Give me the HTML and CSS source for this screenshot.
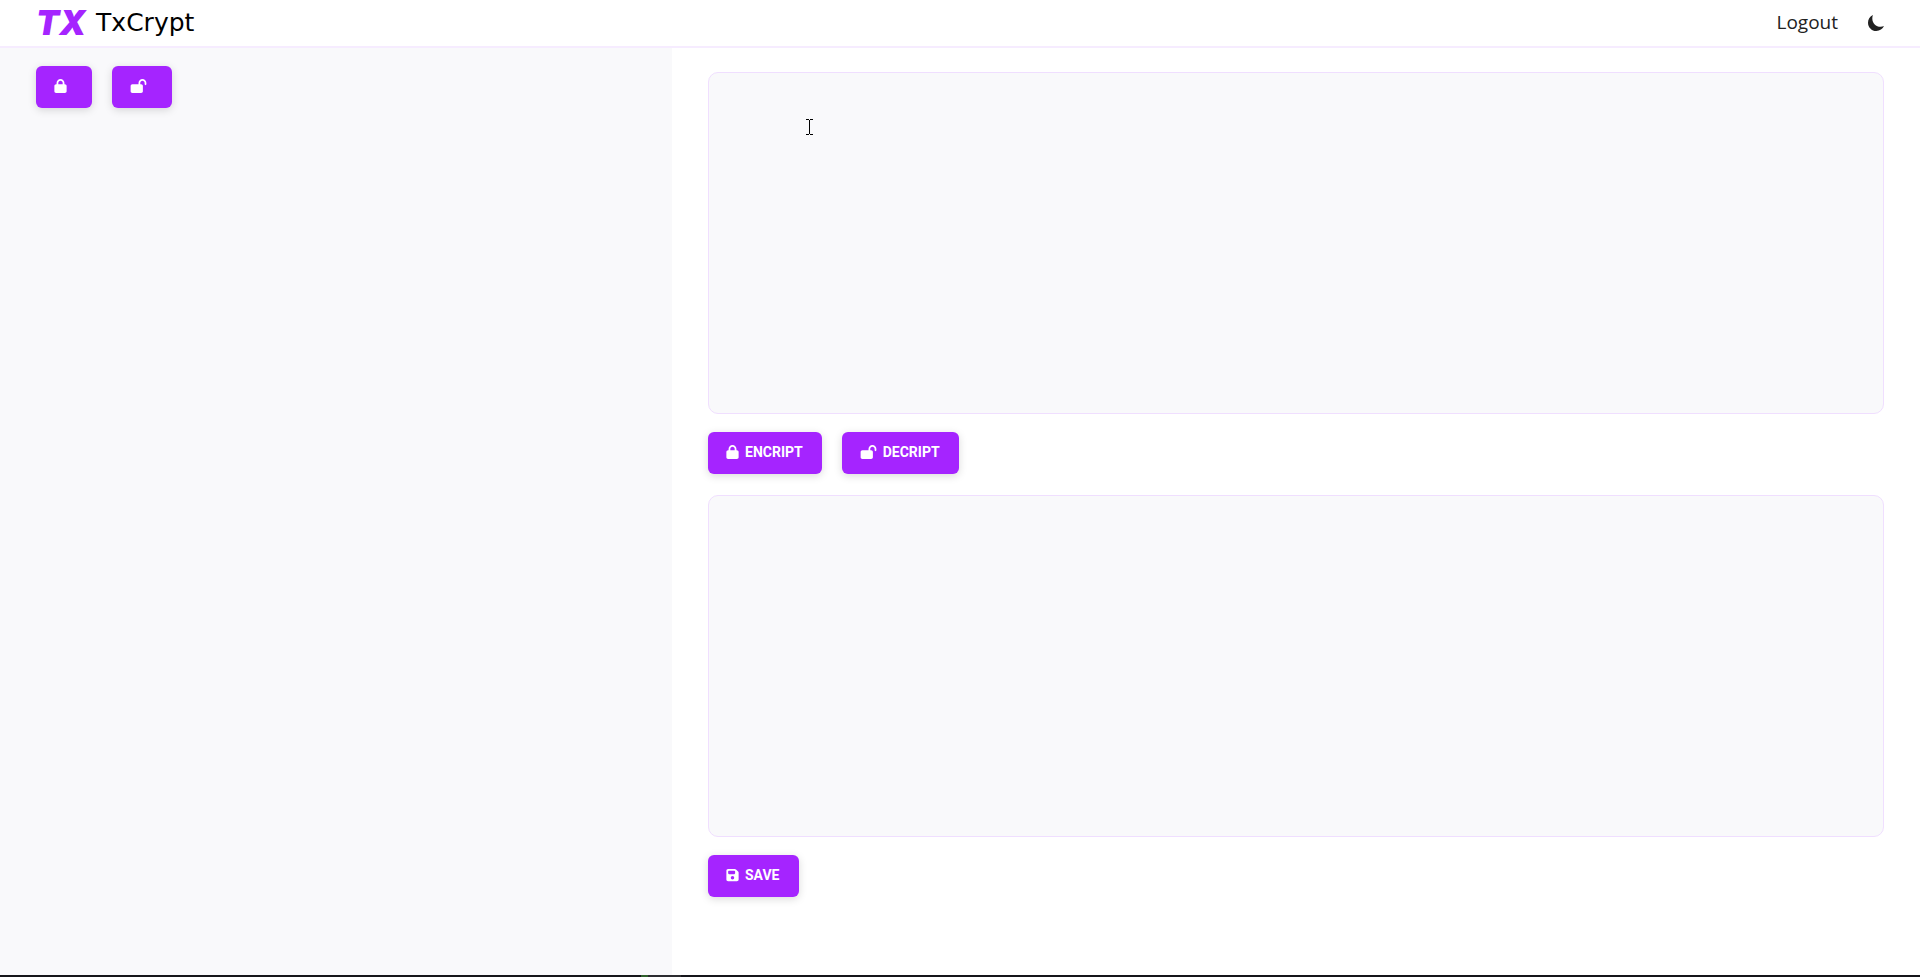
FILE: index.html
```html
<!DOCTYPE html>
<html lang="en">
<head>
<meta charset="utf-8">
<meta name="viewport" content="width=device-width, initial-scale=1">
<title>TxCrypt</title>
<link rel="stylesheet" href="styles.css">
</head>
<body>
<svg class="sprite" aria-hidden="true">
  <symbol id="lock" viewBox="0 0 448 512"><path d="M144 144v48H304V144c0-44.200-35.800-80-80-80s-80 35.800-80 80zM80 192V144C80 64.500 144.500 0 224 0s144 64.500 144 144v48h16c35.300 0 64 28.700 64 64V448c0 35.300-28.700 64-64 64H64c-35.300 0-64-28.700-64-64V256c0-35.300 28.700-64 64-64H80z"/></symbol>
  <symbol id="unlock" viewBox="0 0 576 512"><path d="M352 144c0-44.200 35.800-80 80-80s80 35.800 80 80v48c0 17.700 14.300 32 32 32s32-14.300 32-32V144C576 64.500 511.500 0 432 0S288 64.500 288 144v48H64c-35.300 0-64 28.700-64 64V448c0 35.300 28.700 64 64 64H384c35.300 0 64-28.700 64-64V256c0-35.300-28.700-64-64-64H352V144z"/></symbol>
  <symbol id="save" viewBox="0 0 448 512"><path d="M64 32C28.700 32 0 60.700 0 96V416c0 35.300 28.700 64 64 64H384c35.300 0 64-28.700 64-64V173.300c0-17-6.700-33.300-18.700-45.300L352 50.700C340 38.700 323.700 32 306.700 32H64zm0 96c0-17.700 14.300-32 32-32H288c17.700 0 32 14.300 32 32v64c0 17.700-14.300 32-32 32H96c-17.700 0-32-14.300-32-32V128zM224 288a64 64 0 1 1 0 128 64 64 0 1 1 0-128z"/></symbol>
</svg>
<div class="page">
  <header class="topbar">
    <a class="brand" href="#"><span class="brand-mark">TX</span><span class="brand-name">TxCrypt</span></a>
    <nav class="nav">
      <a class="nav-link" href="#">Logout</a>
      <button class="theme-toggle" type="button" aria-label="Dark mode">
        <svg viewBox="32 32 448 448" aria-hidden="true"><path d="M152.620 126.770c0-33 4.850-66.350 17.230-94.770C87.540 67.830 32 151.890 32 247.380 32 375.850 136.150 480 264.620 480c95.490 0 179.550-55.540 215.380-137.850-28.420 12.380-61.800 17.230-94.770 17.230-128.470 0-232.610-104.140-232.610-232.610z"/></svg>
      </button>
    </nav>
  </header>
  <div class="content">
    <aside class="sidebar">
      <div class="actions">
        <button class="btn" type="button" aria-label="Encrypt files"><svg class="icon" aria-hidden="true"><use href="#lock"/></svg><span></span></button>
        <button class="btn" type="button" aria-label="Decrypt files"><svg class="icon icon-wide" aria-hidden="true"><use href="#unlock"/></svg><span></span></button>
      </div>
    </aside>
    <main class="editor">
      <div class="field">
        <textarea class="text" aria-label="Input text"></textarea>
        <svg class="caret" viewBox="0 0 7 16" aria-hidden="true"><path d="M0 0h3v1h1V0h3v1H4v14h3v1H4v-1H3v1H0v-1h3V1H0z"/></svg>
      </div>
      <div class="actions">
        <button class="btn" type="button"><svg class="icon" aria-hidden="true"><use href="#lock"/></svg><span>ENCRIPT</span></button>
        <button class="btn" type="button"><svg class="icon icon-wide" aria-hidden="true"><use href="#unlock"/></svg><span>DECRIPT</span></button>
      </div>
      <textarea class="text result" aria-label="Result text"></textarea>
      <div class="actions">
        <button class="btn" type="button"><svg class="icon" aria-hidden="true"><use href="#save"/></svg><span>SAVE</span></button>
      </div>
    </main>
  </div>
  <div class="edge"><span class="edge-green"></span><span class="edge-grey"></span></div>
</div>
</body>
</html>
```
FILE: styles.css
```css
* { box-sizing: border-box; }

body {
  margin: 0;
  background: #fff;
  color: #222;
  font-family: Roboto, "Liberation Sans", Arial, sans-serif;
}

.sprite { display: none; }

.page {
  display: flex;
  flex-direction: column;
  min-height: 100vh;
}

.topbar {
  display: flex;
  align-items: center;
  justify-content: space-between;
  height: 48px;
  padding: 0 36px;
  border-bottom: 2px solid #f6ecff;
}

.brand {
  display: flex;
  align-items: center;
  gap: 10px;
  color: #000;
  text-decoration: none;
}

.brand-mark {
  color: #a524ff;
  font: italic 900 34px/46px Inter, sans-serif;
}

.brand-name { font: 25px/46px "DejaVu Sans", sans-serif; }

.nav {
  display: flex;
  align-items: center;
  gap: 30px;
}

.nav-link {
  padding-bottom: 2px;
  color: #222;
  font: 19px/44px "Open Sans", sans-serif;
  text-decoration: none;
}

.theme-toggle {
  display: flex;
  padding: 0;
  border: 0;
  background: none;
  cursor: pointer;
}

.theme-toggle svg {
  width: 16px;
  height: 16px;
  fill: #222;
}

.content {
  display: flex;
  flex: 1;
}

.sidebar {
  width: 35%;
  padding: 18px 36px;
  background: #f9f9fb;
}

.editor {
  flex: 1;
  padding: 24px 36px;
}

.field { position: relative; }

.text {
  display: block;
  width: 100%;
  height: 35vh;
  margin-bottom: 18px;
  padding: 18px;
  border: 1px solid #f0dfff;
  border-radius: 10px;
  outline: 0;
  background: #f9f9fb;
  resize: none;
}

.result { margin-top: 21px; }

/* text pointer floating over the input field */
.caret {
  position: absolute;
  top: 47px;
  left: 98px;
  width: 7px;
  height: 16px;
  fill: #000;
  pointer-events: none;
}

.actions {
  display: flex;
  gap: 20px;
}

.btn {
  display: flex;
  align-items: center;
  gap: 6px;
  height: 42px;
  padding: 0 19px 2px 18px;
  border: 0;
  border-radius: 6px;
  background: #a524ff;
  box-shadow: 0 2px 8px rgba(0, 0, 0, 0.15);
  color: #fff;
  font-family: inherit;
  font-size: 14px;
  font-weight: 700;
  cursor: pointer;
}

.icon {
  width: 13px;
  height: 14px;
  fill: currentColor;
}

.icon-wide { width: 17px; }

.edge {
  display: flex;
  height: 2px;
  padding-left: 641px;
  background: #15151a;
}

.edge-green {
  width: 7px;
  background: #2f5f2c;
}

.edge-grey {
  width: 33px;
  background: #2c2c30;
}
```
